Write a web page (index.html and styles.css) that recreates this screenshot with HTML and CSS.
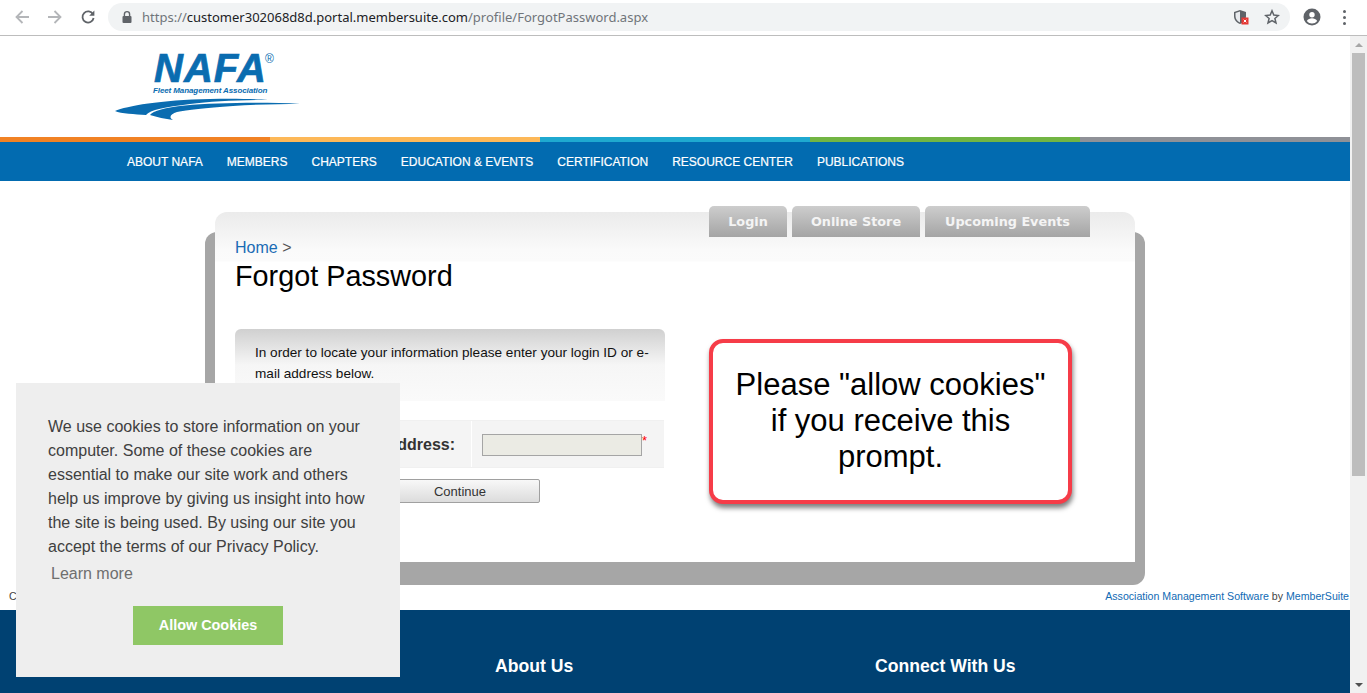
FILE: index.html
```html
<!DOCTYPE html>
<html lang="en">
<head>
    <meta charset="UTF-8">
    <meta name="viewport" content="width=device-width, initial-scale=1.0">
    <title>Forgot Password</title>
    <link rel="stylesheet" href="styles.css">
</head>
<body>
    <!-- Browser toolbar -->
    <div class="toolbar">
        <div class="nav-buttons">
            <svg class="tool-icon" viewBox="0 0 16 16"><path d="M15 8H2.500M8.500 2L2.500 8l6 6" fill="none" stroke="#b4b6b9" stroke-width="1.800"/></svg>
            <svg class="tool-icon" viewBox="0 0 16 16"><path d="M1 8h12.500M7.500 2l6 6-6 6" fill="none" stroke="#b4b6b9" stroke-width="1.800"/></svg>
            <svg class="tool-icon" viewBox="0 0 16 16"><path d="M13 5.200A5.600 5.600 0 1 0 13.600 9" fill="none" stroke="#5f6368" stroke-width="1.800"/><path d="M14.400 1.600v5.200H9.200z" fill="#5f6368"/></svg>
        </div>
        <div class="address">
            <svg class="lock" viewBox="0 0 12 14"><path d="M3.400 6V4.200a2.600 2.600 0 0 1 5.200 0V6" fill="none" stroke="#5f6368" stroke-width="1.400"/><rect x="1.500" y="6" width="9" height="7" rx="1" fill="#5f6368"/></svg>
            <span class="url">https://<span class="host">customer302068d8d.portal.membersuite.com</span>/profile/ForgotPassword.aspx</span>
            <svg class="shield" viewBox="0 0 16 16">
                <path d="M7 1l6 2v4c0 4-2.600 6.800-6 8-3.400-1.200-6-4-6-8V3z" fill="#5f6368"/>
                <path d="M7 2.600V13.500C4.500 12.400 2.500 10 2.500 7V4z" fill="#e8eaed"/>
                <rect x="8.500" y="8.500" width="7" height="7" fill="#e53935"/>
                <path d="M10.700 10.700l2.600 2.600m0-2.600l-2.600 2.600" stroke="#fff" stroke-width="1"/>
            </svg>
            <svg class="star" viewBox="0 0 16 16"><path d="M8 1.800l1.800 4.300 4.600.4-3.500 3 1.100 4.500L8 11.600l-4 2.400 1.100-4.500-3.500-3 4.600-.4z" fill="none" stroke="#5f6368" stroke-width="1.500"/></svg>
        </div>
        <svg class="avatar" viewBox="0 0 18 18"><circle cx="9" cy="9" r="8.500" fill="#5f6368"/><circle cx="9" cy="6.800" r="2.700" fill="#fff"/><path d="M3.800 13c1-1.900 3.200-2.700 5.200-2.700s4.200.8 5.200 2.700A6.500 6.500 0 0 1 9 15.500 6.500 6.500 0 0 1 3.800 13z" fill="#fff"/></svg>
        <div class="menu-dots"><span></span><span></span><span></span></div>
    </div>

    <div class="viewport">
        <div class="page">
            <!-- Logo -->
            <div class="masthead">
                <div class="logo">
                    <div class="logo-name">NAFA<span class="logo-reg">®</span></div>
                    <div class="logo-sub">Fleet Management Association</div>
                    <svg class="logo-swoosh" viewBox="0 0 186 27">
                        <path d="M0 16C12 11 45 5 95 4c25-.5 45 0 58 1-28 0-58 1.500-78 4-25 3-40 6-44 11-11-1-25-1-31-4z" fill="#0a6cb0"/>
                        <path d="M185 8.700C150 7 100 7.500 70 10.500c-20 2-32 5.500-35 9.500 7 2 15 4 23 5-5-3-2-6 4-8 10-2 28-4 56-6 22-1.500 47-2 67-2.300z" fill="#0a6cb0"/>
                    </svg>
                </div>
            </div>

            <div class="stripes">
                <span class="stripe-orange"></span>
                <span class="stripe-yellow"></span>
                <span class="stripe-blue"></span>
                <span class="stripe-green"></span>
                <span class="stripe-gray"></span>
            </div>

            <div class="main-nav">
                <a>ABOUT NAFA</a>
                <a>MEMBERS</a>
                <a>CHAPTERS</a>
                <a>EDUCATION &amp; EVENTS</a>
                <a>CERTIFICATION</a>
                <a>RESOURCE CENTER</a>
                <a>PUBLICATIONS</a>
            </div>

            <!-- Content panel -->
            <div class="panel">
                <div class="card">
                    <div class="tabs">
                        <a class="tab tab-login">Login</a>
                        <a class="tab tab-store">Online Store</a>
                        <a class="tab tab-events">Upcoming Events</a>
                    </div>
                    <div class="breadcrumb"><a>Home</a> &gt;</div>
                    <h1>Forgot Password</h1>
                    <div class="form-section">
                        <div class="message">In order to locate your information please enter your login ID or e-mail address below.</div>
                        <div class="form-row">
                            <div class="form-label">Login ID or E-mail Address:</div>
                            <div class="form-field"><span class="text-input"></span><span class="required">*</span></div>
                        </div>
                        <div class="form-actions"><button class="continue-btn">Continue</button></div>
                    </div>
                </div>
            </div>

            <div class="credits">
                <span class="copyright">Copyright</span>
                <span><a>Association Management Software</a> by <a>MemberSuite</a></span>
            </div>

            <div class="footer">
                <h3>About Us</h3>
                <h3>Connect With Us</h3>
            </div>
        </div>

        <div class="scrollbar">
            <span class="arrow-up"></span>
            <span class="thumb"></span>
            <span class="arrow-down"></span>
        </div>
    </div>

    <!-- Overlays -->
    <div class="callout">Please "allow cookies" if you receive this prompt.</div>

    <div class="cookie-box">
        <p>We use cookies to store information on your computer. Some of these cookies are essential to make our site work and others help us improve by giving us insight into how the site is being used. By using our site you accept the terms of our Privacy Policy.</p>
        <a class="learn-more">Learn more</a>
        <button class="allow-btn">Allow Cookies</button>
    </div>
</body>
</html>
```

FILE: styles.css
```css
* {
    box-sizing: border-box;
}

html, body {
    height: 100%;
}

body {
    margin: 0;
    overflow: hidden;
    font-family: "Liberation Sans", Arial, sans-serif;
    background-color: #fff;
}

/* Browser toolbar */
.toolbar {
    display: flex;
    align-items: center;
    height: 36px;
    padding: 0 0 1px 14px;
    background: #fff;
    border-bottom: 1px solid #bdbdbd;
}

.nav-buttons {
    display: flex;
    gap: 17px;
    width: 94px;
}

.tool-icon {
    width: 16px;
    height: 16px;
}

.address {
    display: flex;
    align-items: center;
    width: 1182px;
    height: 28px;
    padding: 0 10px 0 13px;
    background: #f1f3f4;
    border-radius: 14px;
}

.lock {
    width: 12px;
    height: 14px;
    margin-right: 9px;
}

.url {
    flex: 1;
    font-family: "Noto Sans", sans-serif;
    font-size: 13px;
    color: #70757a;
}

.host {
    color: #202124;
}

.shield {
    width: 16px;
    height: 16px;
    margin-right: 15px;
}

.star {
    width: 16px;
    height: 16px;
}

.avatar {
    width: 18px;
    height: 18px;
    margin-left: 13px;
}

.menu-dots {
    display: flex;
    flex-direction: column;
    gap: 3px;
    margin-left: 22px;
}

.menu-dots span {
    width: 3px;
    height: 3px;
    border-radius: 50%;
    background: #5f6368;
}

/* Page */
.viewport {
    display: flex;
    height: 657px;
    overflow: hidden;
}

.page {
    width: 1350px;
    flex: none;
}

.masthead {
    height: 101px;
    padding: 13px 0 0 115px;
}

.logo {
    width: 186px;
    color: #0a6cb0;
}

.logo-name {
    position: relative;
    margin-left: 39px;
    font-size: 40px;
    font-weight: bold;
    font-style: italic;
    line-height: 38px;
    letter-spacing: 1px;
    -webkit-text-stroke: 0.7px #0a6cb0;
}

.logo-reg {
    position: absolute;
    top: -9px;
    left: 111px;
    font-size: 12px;
    font-style: normal;
    font-weight: normal;
    letter-spacing: 0;
    -webkit-text-stroke: 0;
}

.logo-sub {
    margin: -1px 0 0 38px;
    font-size: 8px;
    font-weight: bold;
    font-style: italic;
    letter-spacing: -0.1px;
    line-height: 9px;
    white-space: nowrap;
}

.logo-swoosh {
    display: block;
    width: 186px;
    height: 27px;
}

.stripes {
    display: flex;
    height: 5px;
}

.stripes span {
    width: 270px;
}

.stripe-orange { background: #f18224; }
.stripe-yellow { background: #fdb858; }
.stripe-blue { background: #1fa9d0; }
.stripe-green { background: #72b543; }
.stripe-gray { background: #8f9197; }

.main-nav {
    display: flex;
    align-items: center;
    gap: 24px;
    height: 39px;
    padding-left: 127px;
    background: #026bb0;
}

.main-nav a {
    color: #fff;
    font-size: 12px;
    -webkit-text-stroke: 0.2px #fff;
}

.panel {
    width: 940px;
    height: 353px;
    margin: 51px 0 0 205px;
    padding: 0 10px;
    background: #a6a6a6;
    border-radius: 12px;
}

.card {
    position: relative;
    top: -20px;
    height: 350px;
    padding: 0 20px;
    background: linear-gradient(#ebebeb, #fafafa 38px, #fbfbfb 49px, #fff 50px);
    border-radius: 12px 12px 0 0;
}

.tabs {
    display: flex;
    justify-content: flex-end;
    gap: 5px;
    margin: 0 25px 0 0;
    transform: translateY(-6px);
}

.tab {
    display: flex;
    align-items: center;
    justify-content: center;
    height: 31px;
    font-family: "DejaVu Sans", sans-serif;
    font-size: 12.800px;
    font-weight: bold;
    color: #f4f4f4;
    background: linear-gradient(#cdcdcd, #a4a4a4);
    border-radius: 5px 5px 0 0;
}

.tab-login { width: 78px; }
.tab-store { width: 128px; }
.tab-events { width: 165px; }

.breadcrumb {
    margin-top: -4px;
    font-size: 16px;
    line-height: 18px;
    color: #555;
}

.breadcrumb a {
    color: #1a6cb5;
}

h1 {
    margin: 2px 0 0;
    font-size: 28.800px;
    font-weight: normal;
    line-height: 34px;
    color: #000;
}

.form-section {
    width: 430px;
    margin-top: 36px;
}

.message {
    height: 72px;
    padding: 13px 14px 0 20px;
    font-size: 13.600px;
    line-height: 21px;
    color: #111;
    background: linear-gradient(#d0d0d0, #f6f6f6 36px, #fafafa);
    border-radius: 6px 6px 0 0;
}

.form-row {
    display: flex;
    gap: 1px;
    width: 429px;
    margin-top: 19px;
    border-top: 1px solid #f0f0f0;
    border-bottom: 1px solid #f0f0f0;
}

.form-label {
    width: 236px;
    padding: 1px 16px 0 0;
    font-size: 16px;
    font-weight: bold;
    line-height: 45px;
    text-align: right;
    color: #333;
    background: #f4f4f4;
}

.form-field {
    display: flex;
    flex: 1;
    padding: 13px 0 0 10px;
    background: #f4f4f4;
}

.text-input {
    width: 160px;
    height: 22px;
    background: #ebebe4;
    border: 1px solid #a5a5a5;
}

.required {
    font-size: 13px;
    line-height: 14px;
    color: #f00;
}

.form-actions {
    margin-top: 11px;
    padding-left: 145px;
}

.continue-btn {
    width: 160px;
    height: 24px;
    padding: 0;
    font-family: "Liberation Sans", Arial, sans-serif;
    font-size: 13px;
    color: #333;
    background: linear-gradient(#f8f8f8, #dcdcdc);
    border: 1px solid #a0a0a0;
    border-radius: 2px;
}

.credits {
    display: flex;
    justify-content: space-between;
    height: 25px;
    padding: 5px 1px 0 9px;
    font-size: 10.600px;
    line-height: 12px;
    color: #444;
}

.credits a {
    color: #0f6ab4;
}

.footer {
    display: flex;
    height: 100px;
    padding: 44px 0 0 495px;
    background: #004172;
}

.footer h3 {
    width: 380px;
    margin: 0;
    font-size: 17.600px;
    line-height: 24px;
    color: #fff;
}

/* Scrollbar */
.scrollbar {
    position: relative;
    flex: 1;
    background: #f1f1f1;
}

.thumb {
    position: absolute;
    top: 17px;
    left: 2px;
    width: 13px;
    height: 423px;
    background: #bdbdbd;
}

.arrow-up, .arrow-down {
    position: absolute;
    left: 5px;
    border-left: 4px solid transparent;
    border-right: 4px solid transparent;
}

.arrow-up {
    top: 7px;
    border-bottom: 4px solid #a6a6a6;
}

.arrow-down {
    bottom: 6px;
    border-top: 4px solid #505050;
}

/* Overlays */
.callout {
    position: absolute;
    top: 339px;
    left: 709px;
    width: 363px;
    height: 165px;
    padding: 24px 16px 0;
    font-size: 31px;
    line-height: 36px;
    text-align: center;
    color: #000;
    background: #fff;
    border: 4px solid #f63c48;
    border-radius: 14px;
    box-shadow: 1px 4px 5px rgba(0, 0, 0, 0.5);
}

.cookie-box {
    position: fixed;
    top: 383px;
    left: 16px;
    display: flex;
    flex-direction: column;
    width: 384px;
    height: 294px;
    padding: 32px 32px 0;
    font-size: 16px;
    line-height: 24px;
    color: #404040;
    background: #eee;
}

.cookie-box p {
    margin: 0;
}

.learn-more {
    margin: 3px 0 0 3px;
    color: #6f6f6f;
}

.allow-btn {
    width: 150px;
    height: 39px;
    margin: 20px 0 0 85px;
    padding: 0 0 1px;
    font-family: "Liberation Sans", Arial, sans-serif;
    font-size: 14.400px;
    font-weight: bold;
    color: #fff;
    background: #8fc765;
    border: none;
}
```
